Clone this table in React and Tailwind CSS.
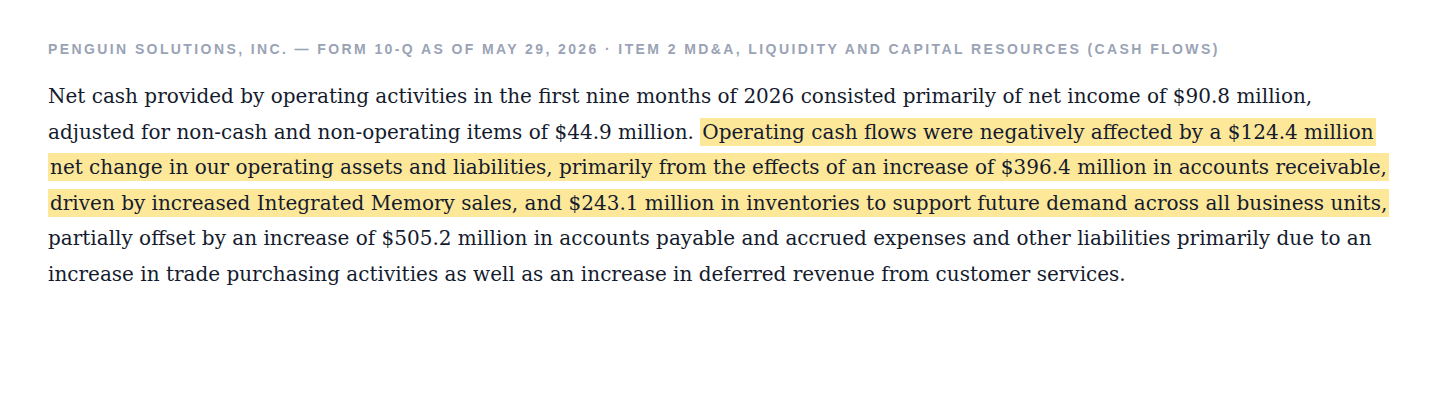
export default function App() {
  return (
    <div className="min-h-screen bg-white px-12 pt-[41px]">
      <p
        className="text-[14px] font-bold uppercase tracking-[2.4px] text-[#9aa3b5] leading-4"
        style={{ fontFamily: '"Liberation Sans", Arial, sans-serif' }}
      >
        Penguin Solutions, Inc. — Form 10-Q as of May 29, 2026 · Item 2 MD&amp;A, Liquidity and Capital Resources (Cash Flows)
      </p>
      <p
        className="mt-[22px] text-[20px] leading-[35.5px] text-[#141b2d]"
        style={{ fontFamily: '"DejaVu Serif", Georgia, serif' }}
      >
        Net cash provided by operating activities in the first nine months of 2026 consisted primarily of net income of $90.8 million,
        adjusted for non-cash and non-operating items of $44.9 million.{" "}
        <mark className="bg-[#fde89a] text-[#141b2d] px-[2px] py-[2px] box-decoration-clone">
          Operating cash flows were negatively affected by a $124.4 million net change in our operating assets and liabilities, primarily from the effects of an increase of $396.4 million in accounts receivable, driven by increased Integrated Memory sales, and $243.1 million in inventories to support future demand across all business units,
        </mark>{" "}
        partially offset by an increase of $505.2 million in accounts payable and accrued expenses and other liabilities primarily due to an increase in trade purchasing activities as well as an increase in deferred revenue from customer services.
      </p>
    </div>
  );
}
